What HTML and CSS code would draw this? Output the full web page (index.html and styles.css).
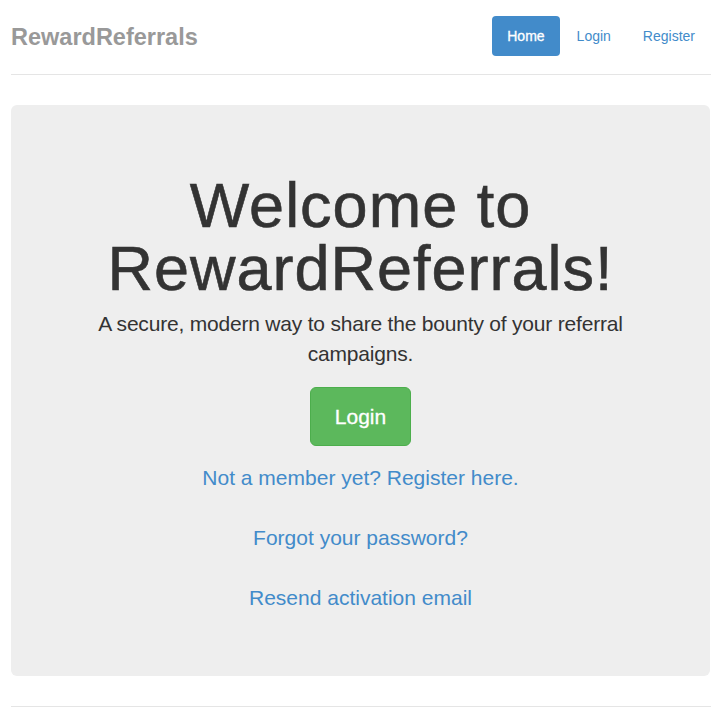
FILE: index.html
```html
<!DOCTYPE html>
<html lang="en">
<head>
<meta charset="utf-8">
<title>RewardReferrals</title>
<link rel="stylesheet" href="styles.css">
</head>
<body>
<div class="container">
  <header class="header">
    <h3 class="brand">RewardReferrals</h3>
    <nav class="nav">
      <a class="pill active" href="#">Home</a>
      <a class="pill" href="#">Login</a>
      <a class="pill" href="#">Register</a>
    </nav>
  </header>

  <main class="jumbotron">
    <h1 class="title">Welcome to RewardReferrals!</h1>
    <p class="lead">A secure, modern way to share the bounty of your referral campaigns.</p>
    <a class="btn-login" href="#">Login</a>
    <p class="link-row first"><a href="#">Not a member yet? Register here.</a></p>
    <p class="link-row"><a href="#">Forgot your password?</a></p>
    <p class="link-row"><a href="#">Resend activation email</a></p>
  </main>

  <footer class="footer"></footer>
</div>
</body>
</html>
```

FILE: styles.css
```css
* { box-sizing: border-box; }

html, body {
  margin: 0;
  padding: 0;
  background: #fff;
}

body {
  font-family: "Liberation Sans", Arial, Helvetica, sans-serif;
  font-size: 14px;
  line-height: 20px;
  color: #333;
}

a { text-decoration: none; color: #428bca; }

.container {
  margin-left: 11px;
  width: 700px;
  padding-top: 16px;
}

.header {
  display: flex;
  justify-content: space-between;
  align-items: flex-start;
  padding-bottom: 17px;
  border-bottom: 1px solid #e5e5e5;
  margin-bottom: 30px;
}

.brand {
  margin: 1px 0 0 0;
  font-size: 23.5px;
  line-height: 40px;
  font-weight: bold;
  color: #999;
}

.nav {
  display: flex;
  gap: 2px;
  margin-right: 1px;
}

.pill {
  display: block;
  padding: 10px 15px;
  line-height: 20px;
  font-size: 14px;
  border-radius: 4px;
  color: #428bca;
}

.pill.active {
  background: #428bca;
  color: #fff;
  -webkit-text-stroke: 0.3px #fff;
}

.jumbotron {
  width: 699px;
  background: #eee;
  border-radius: 6px;
  padding: 48px 60px;
  text-align: center;
  margin-bottom: 30px;
}

.title {
  margin: 21px 0 9px;
  font-size: 63px;
  line-height: 63px;
  font-weight: normal;
  letter-spacing: 1px;
  color: #333;
  -webkit-text-stroke: 0.6px #333;
}

.lead {
  margin: 0 0 18px;
  font-size: 21px;
  line-height: 30px;
  letter-spacing: -0.2px;
  color: #333;
}

.btn-login {
  display: inline-block;
  padding: 14px 24px;
  font-size: 21px;
  line-height: 29px;
  color: #fff;
  background: #5cb85c;
  border: 1px solid #4cae4c;
  border-radius: 6px;
  -webkit-text-stroke: 0.3px #fff;
}

.link-row {
  margin: 0 0 30px;
  font-size: 21px;
  line-height: 30px;
}

.link-row.first { margin-top: 17px; }

.link-row:last-child { margin-bottom: 15px; }

.footer {
  border-top: 1px solid #e5e5e5;
  height: 40px;
}
```
